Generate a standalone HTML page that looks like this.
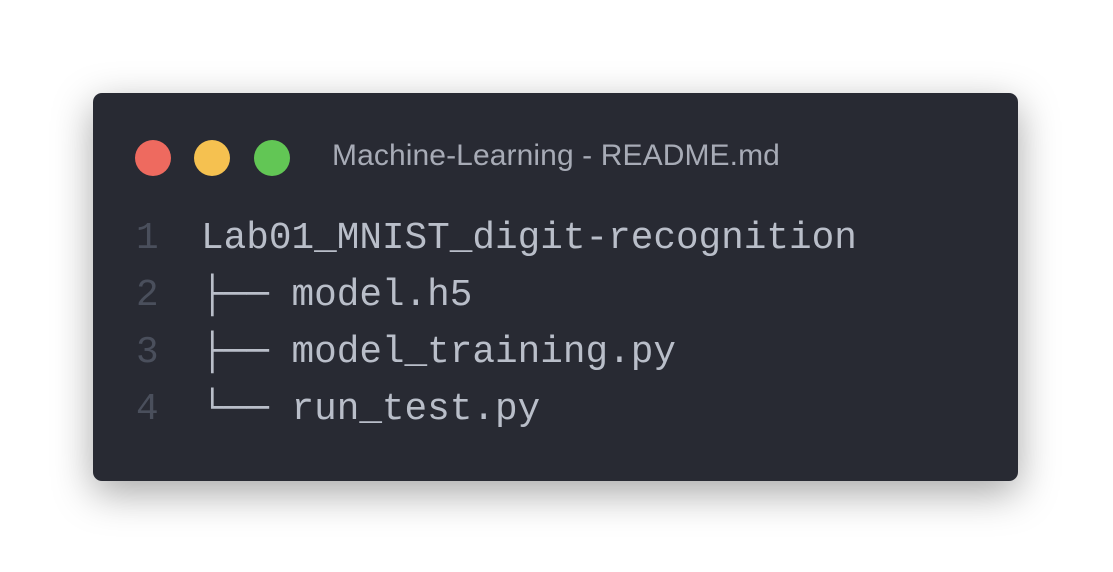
<!DOCTYPE html>
<html><head><style>
html,body{margin:0;padding:0;background:#fff;width:1113px;height:572px;overflow:hidden}
.card{position:absolute;left:93px;top:93px;width:925px;height:388px;background:#282a33;border-radius:9px;box-shadow:0 12px 40px rgba(0,0,0,0.35)}
.dot{position:absolute;top:47px;width:36px;height:36px;border-radius:50%}
.title{position:absolute;left:239px;top:45px;font:30px "Liberation Sans",sans-serif;color:#a7abb6;line-height:36px;white-space:nowrap;letter-spacing:0.1px}
.ln{position:absolute;left:0;width:925px;font:37.7px "Liberation Mono","DejaVu Sans Mono",monospace;line-height:44px;white-space:pre;color:#b9bec9}
.ln .n{position:absolute;left:43px;color:#4a4f5c}
.ln .t{position:absolute;left:108px}
</style></head><body>
<div class="card">
<div class="dot" style="left:42px;background:#ee6a5f"></div>
<div class="dot" style="left:101px;background:#f5c150"></div>
<div class="dot" style="left:161px;background:#62c655"></div>
<div class="title">Machine-Learning - README.md</div>
<div class="ln" style="top:124px"><span class="n">1</span><span class="t">Lab01_MNIST_digit-recognition</span></div>
<div class="ln" style="top:181px"><span class="n">2</span><span class="t">├── model.h5</span></div>
<div class="ln" style="top:238px"><span class="n">3</span><span class="t">├── model_training.py</span></div>
<div class="ln" style="top:295px"><span class="n">4</span><span class="t">└── run_test.py</span></div>
</div>
</body></html>
